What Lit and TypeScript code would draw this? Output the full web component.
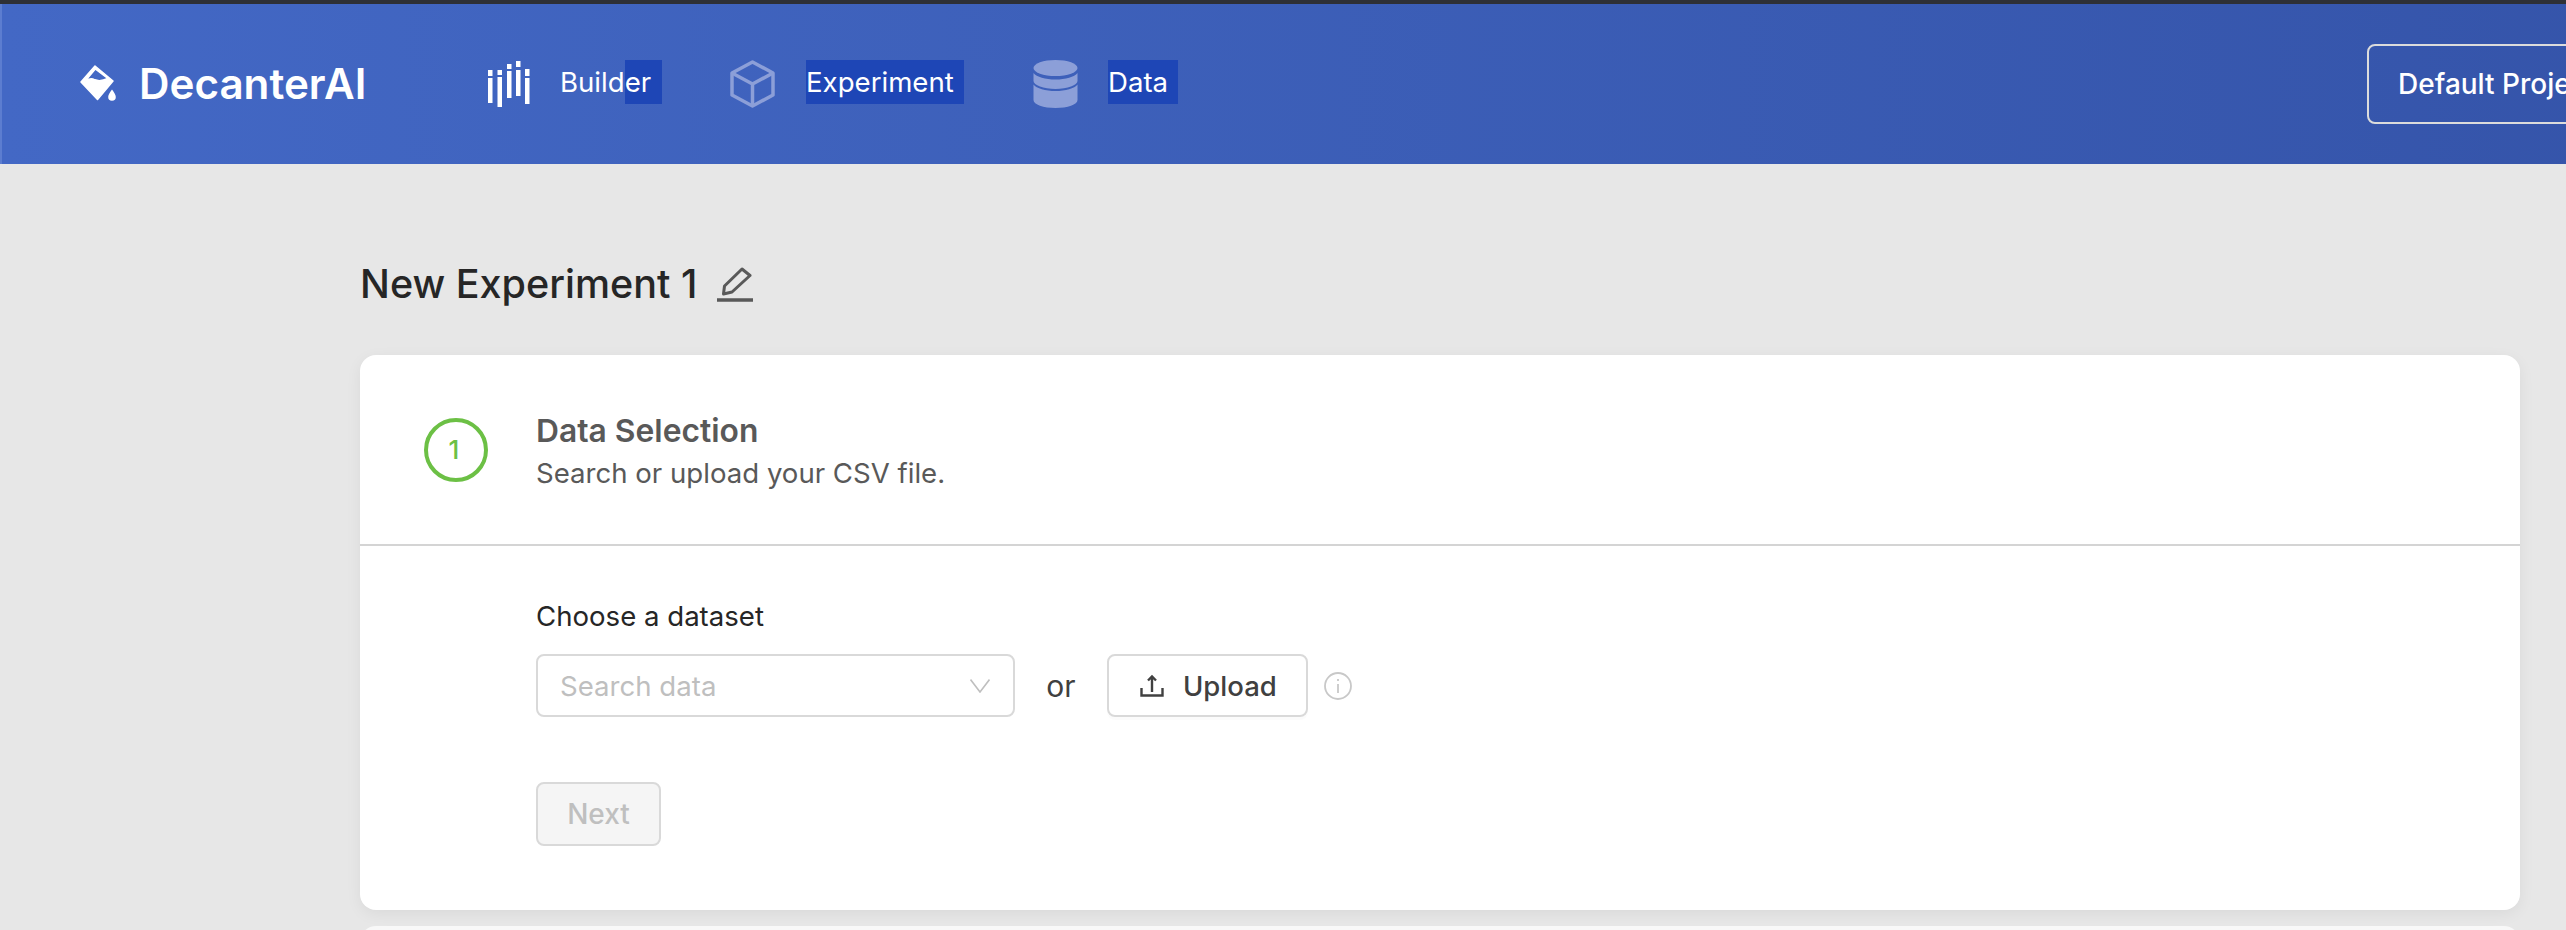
import { LitElement, html, css } from "lit";
import { customElement } from "lit/decorators.js";

@customElement("app-root")
export class AppRoot extends LitElement {
  static styles = css`
    :host {
      display: block;
      width: 2566px;
      height: 930px;
      overflow: hidden;
      background: #e7e7e7;
      font-family: Inter, "Liberation Sans", sans-serif;
      color: #262626;
    }
    .top {
      height: 4px;
      background: #2e3036;
    }
    header {
      height: 160px;
      box-sizing: border-box;
      display: flex;
      align-items: center;
      width: 2800px;
      background: linear-gradient(90deg, #4368c5 0%, #3453a8 100%);
      border-left: 2px solid #5c7dd0;
      padding-left: 78px;
      color: #fff;
    }
    .logo {
      display: flex;
      align-items: center;
      width: 407px;
      flex: none;
    }
    .logo svg {
      width: 36px;
      height: 37px;
      margin-right: 23px;
    }
    .word {
      font-weight: 600;
      font-size: 42.2px;
      line-height: 1;
    }
    .nav {
      display: flex;
      align-items: center;
      flex: none;
    }
    .nav svg {
      display: block;
      flex: none;
    }
    .label {
      font-size: 27.6px;
      line-height: 44px;
      height: 44px;
      margin-bottom: 4px;
      white-space: pre;
    }
    .sel {
      background: #1e46b6;
      padding-right: 10px;
      display: inline-block;
    }
    .builder {
      width: 243px;
      gap: 30px;
    }
    .builder .sel {
      padding-right: 11px;
    }
    .experiment {
      width: 303px;
      gap: 31px;
    }
    .data {
      gap: 30px;
    }
    .project {
      margin-left: 1189px;
      width: 400px;
      height: 80px;
      box-sizing: border-box;
      border: 2px solid #dcdcdc;
      border-radius: 8px;
      padding-left: 29px;
      font-size: 28px;
      font-weight: 500;
      line-height: 76px;
      white-space: nowrap;
      flex: none;
    }
    main {
      padding: 0 46px 0 360px;
    }
    h1 {
      margin: 0;
      height: 191px;
      box-sizing: border-box;
      padding-top: 97px;
      font-size: 39.5px;
      line-height: 46px;
      font-weight: 500;
      color: #262626;
      display: flex;
      align-items: flex-start;
      gap: 20px;
    }
    h1 svg {
      margin-top: 6px;
    }
    .card {
      background: #fff;
      border-radius: 16px;
      box-shadow: 0 4px 16px rgba(0, 0, 0, 0.06);
    }
    .head {
      height: 191px;
      box-sizing: border-box;
      border-bottom: 2px solid #d4d4d4;
      display: flex;
      align-items: center;
      padding-left: 64px;
      gap: 48px;
    }
    .step {
      width: 64px;
      height: 64px;
      box-sizing: border-box;
      border: 4px solid #6cc045;
      border-radius: 50%;
      color: #6cc045;
      font-size: 26px;
      font-weight: 500;
      display: flex;
      align-items: center;
      justify-content: center;
      padding-right: 4px;
    }
    .titles {
      padding-top: 4px;
    }
    .t1 {
      font-size: 31.8px;
      line-height: 43px;
      font-weight: 600;
      color: #595959;
    }
    .t2 {
      font-size: 27.6px;
      line-height: 43px;
      color: #595959;
    }
    .body {
      padding: 50px 0 64px 176px;
    }
    .choose {
      font-size: 27.6px;
      line-height: 40px;
      height: 58px;
      color: #262626;
    }
    .row {
      display: flex;
      align-items: center;
    }
    .select {
      width: 479px;
      height: 63px;
      box-sizing: border-box;
      border: 2px solid #d9d9d9;
      border-radius: 8px;
      display: flex;
      align-items: center;
      justify-content: space-between;
      padding: 0 23px 0 22px;
      font-size: 27.6px;
      color: #bfbfbf;
    }
    .or {
      font-size: 30px;
      width: 92px;
      text-align: center;
      color: #404040;
    }
    .upload {
      width: 201px;
      height: 63px;
      box-sizing: border-box;
      border: 2px solid #d9d9d9;
      border-radius: 8px;
      box-shadow: 0 3px 0 rgba(0, 0, 0, 0.015);
      display: flex;
      align-items: center;
      gap: 19px;
      padding-left: 31px;
      font-size: 27.5px;
      font-weight: 500;
      color: #404040;
    }
    .info {
      margin-left: 16px;
    }
    .next {
      margin-top: 65px;
      width: 125px;
      height: 64px;
      box-sizing: border-box;
      border: 2px solid #d9d9d9;
      border-radius: 8px;
      background: #f5f5f5;
      color: #bfbfbf;
      font-size: 28px;
      font-weight: 500;
      display: flex;
      align-items: center;
      justify-content: center;
    }
    .card2 {
      margin-top: 16px;
      height: 40px;
      background: #f8f8f8;
      border-radius: 16px;
    }
  `;

  render() {
    return html`
      <div class="top"></div>
      <header>
        <div class="logo">
          <svg viewBox="0 0 36 37" fill="#fff">
            <path
              fill-rule="evenodd"
              stroke="#fff"
              stroke-width="1.500"
              stroke-linejoin="round"
              d="M15 1L33 16L17.500 34.500L1 17zM15.300 4L4.800 16.500c3-2.500 7-3.200 10-1.700c3.500 1.500 7 1.500 13-1.300z"
            />
            <path d="M32 24.500c2 3 3.800 5 3.800 7.500a3.800 3.800 0 0 1-7.600 0c0-2.500 1.800-4.500 3.800-7.500z" />
          </svg>
          <span class="word">DecanterAI</span>
        </div>
        <div class="nav builder">
          <svg width="43" height="46" viewBox="0 0 43 46" fill="#fff">
            <rect x="1" y="9" width="4.500" height="6" />
            <rect x="1" y="17" width="4.500" height="25" />
            <rect x="10.500" y="9" width="4.500" height="5" />
            <rect x="10.500" y="16" width="4.500" height="30" />
            <rect x="20" y="3" width="4.500" height="5" />
            <rect x="20" y="10" width="4.500" height="27" />
            <rect x="29" y="0" width="4.500" height="6" />
            <rect x="29" y="9" width="4.500" height="26" />
            <rect x="38" y="8" width="4.500" height="7" />
            <rect x="38" y="17" width="4.500" height="26" />
          </svg>
          <span class="label">Build<span class="sel">er</span></span>
        </div>
        <div class="nav experiment">
          <svg width="45" height="48" viewBox="0 0 45 48" fill="none" stroke="#8c9fd8" stroke-width="3.500" stroke-linejoin="round">
            <path d="M22.500 2L43 13V35L22.500 46L2 35V13Z" />
            <path d="M2 13L22.500 24L43 13M22.500 24V46" />
          </svg>
          <span class="label sel">Experiment</span>
        </div>
        <div class="nav data">
          <svg width="45" height="48" viewBox="0 0 45 48" fill="#8c9fd8">
            <ellipse cx="22.500" cy="8" rx="22" ry="8" />
            <path d="M0.500 13c3 4 12 6.500 22 6.500s19-2.500 22-6.500v8c0 4-10 8-22 8s-22-4-22-8z" />
            <path d="M0.500 24.500c3 4 12 6.500 22 6.500s19-2.500 22-6.500v15.500c0 4.500-10 8-22 8s-22-3.500-22-8z" />
          </svg>
          <span class="label sel">Data</span>
        </div>
        <div class="project">Default Project</div>
      </header>
      <main>
        <h1>
          New Experiment 1
          <svg width="36" height="36" viewBox="0 0 36 36" fill="none" stroke="#595959" stroke-width="3" stroke-linejoin="round">
            <path d="M25 2L33 8.500L15 25L6.500 27L7.500 19Z" />
            <path d="M0 33H36" stroke-width="3.500" />
          </svg>
        </h1>
        <div class="card">
          <div class="head">
            <div class="step">1</div>
            <div class="titles">
              <div class="t1">Data Selection</div>
              <div class="t2">Search or upload your CSV file.</div>
            </div>
          </div>
          <div class="body">
            <div class="choose">Choose a dataset</div>
            <div class="row">
              <div class="select">
                <span>Search data</span>
                <svg width="20" height="14" viewBox="0 0 20 14" fill="none" stroke="#bfbfbf" stroke-width="1.600">
                  <path d="M0.500 0.500L10 13L19.500 0.500" />
                </svg>
              </div>
              <div class="or">or</div>
              <div class="upload">
                <svg width="24" height="24" viewBox="0 0 24 24" fill="none" stroke="#404040" stroke-width="2.400">
                  <path d="M12 18V2.500M8 6.500L12 2.500L16 6.500" />
                  <path d="M1.500 14V21.500H22.500V14" />
                </svg>
                <span>Upload</span>
              </div>
              <svg class="info" width="28" height="28" viewBox="0 0 28 28" fill="none" stroke="#c8c8c8" stroke-width="1.800">
                <circle cx="14" cy="14" r="13" />
                <path d="M14 12V21M14 7V9" />
              </svg>
            </div>
            <div class="next">Next</div>
          </div>
        </div>
        <div class="card2"></div>
      </main>
    `;
  }
}
